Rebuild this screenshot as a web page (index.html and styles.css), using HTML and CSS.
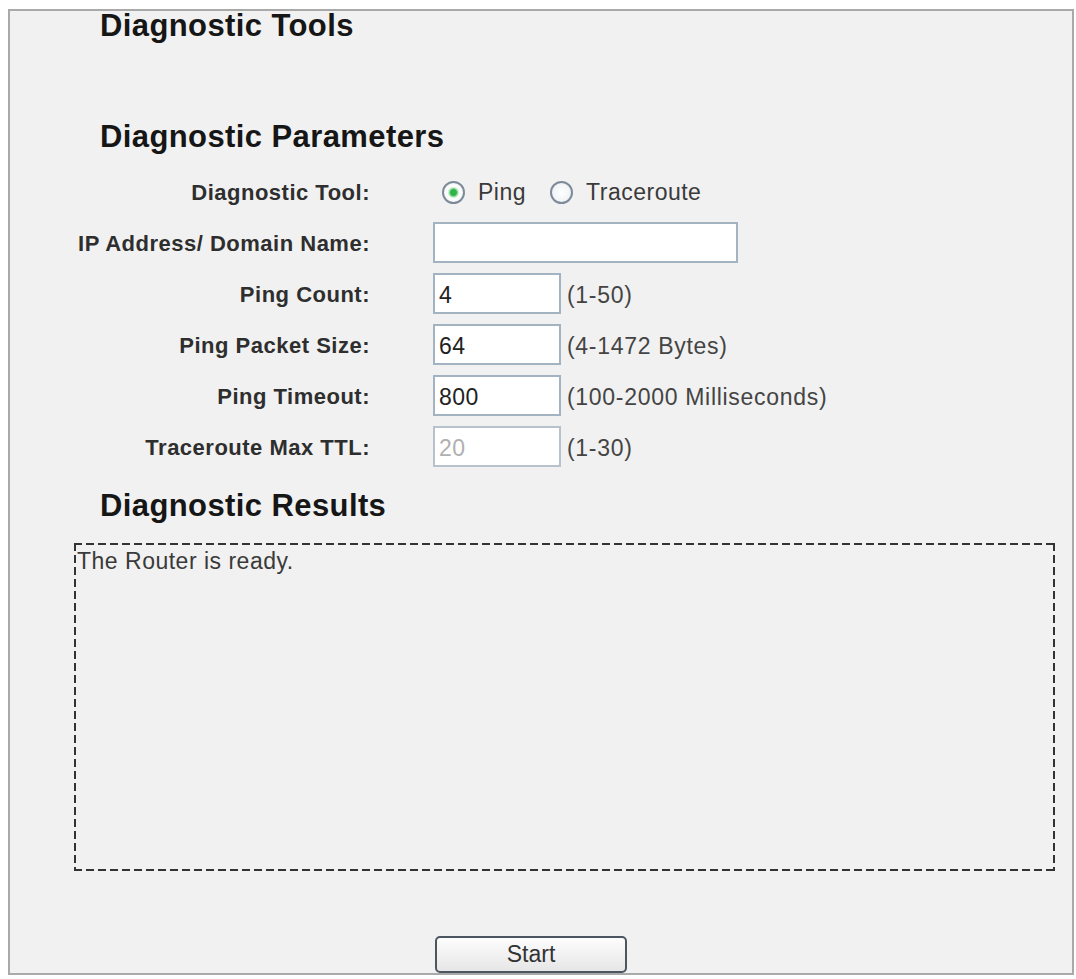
FILE: index.html
```html
<!DOCTYPE html>
<html lang="en">
<head>
    <meta charset="UTF-8">
    <title>Diagnostic Tools</title>
    <link rel="stylesheet" href="styles.css">
</head>
<body>

<div class="panel">
    <h2 class="title">Diagnostic Tools</h2>

    <h3 class="section">Diagnostic Parameters</h3>

    <div class="params">
        <div class="row">
            <span class="label">Diagnostic Tool:</span>
            <span class="radios">
                <label class="radio"><input type="radio" name="tool" value="ping" checked> Ping</label>
                <label class="radio"><input type="radio" name="tool" value="trace"> Traceroute</label>
            </span>
        </div>
        <div class="row">
            <label class="label" for="host">IP Address/ Domain Name:</label>
            <input class="field wide" type="text" id="host">
        </div>
        <div class="row">
            <label class="label" for="count">Ping Count:</label>
            <input class="field" type="text" id="count" value="4">
            <span class="hint">(1-50)</span>
        </div>
        <div class="row">
            <label class="label" for="size">Ping Packet Size:</label>
            <input class="field" type="text" id="size" value="64">
            <span class="hint">(4-1472 Bytes)</span>
        </div>
        <div class="row">
            <label class="label" for="timeout">Ping Timeout:</label>
            <input class="field" type="text" id="timeout" value="800">
            <span class="hint">(100-2000 Milliseconds)</span>
        </div>
        <div class="row">
            <label class="label" for="ttl">Traceroute Max TTL:</label>
            <input class="field" type="text" id="ttl" value="20" disabled>
            <span class="hint">(1-30)</span>
        </div>
    </div>

    <h3 class="section results-title">Diagnostic Results</h3>

    <!-- output of ping / traceroute goes here -->
    <div class="results">The Router is ready.</div>

    <div class="actions">
        <button class="start" type="button">Start</button>
    </div>
</div>

</body>
</html>
```

FILE: styles.css
```css
body {
    margin: 9px 2px 4px 8px;
    background-color: #fff;
    font-family: "Liberation Sans", Arial, sans-serif;
    color: #333;
}

.panel {
    border: 2px solid #a9a9a9;
    background-color: #f1f1f1;
}

.title, .section {
    margin: 0;
    padding-left: 90px;
    font-size: 31px;
    line-height: 30px;
    letter-spacing: 0.4px;
    font-weight: bold;
    color: #161616;
}

.section {
    margin-top: 81px;
}

.params {
    margin-top: 19px;
    display: flex;
    flex-direction: column;
    gap: 10px;
}

.row {
    display: flex;
    align-items: center;
    height: 41px;
}

.label {
    width: 360px;
    margin-right: 63px;
    padding-top: 3px;
    line-height: 38px;
    text-align: right;
    font-size: 22px;
    letter-spacing: 0.5px;
    font-weight: bold;
    color: #2e2e2e;
}

.radios {
    display: flex;
    align-items: center;
    padding-left: 9px;
    padding-top: 1px;
    font-size: 23px;
    letter-spacing: 0.5px;
    color: #3a3a3a;
}

.radio {
    display: flex;
    align-items: center;
    margin-right: 24px;
}

.radio input {
    appearance: none;
    width: 23px;
    height: 23px;
    margin: 0 13px 0 0;
    border: 2px solid #7d8b99;
    border-radius: 50%;
    background: radial-gradient(circle, #fff 0, #e9edf1 100%);
}

.radio input:checked {
    background: radial-gradient(circle, #2fb34a 0 3px, #8fdc9c 4px, #fff 6px, #e9edf1 100%);
}

.field {
    box-sizing: border-box;
    width: 128px;
    height: 41px;
    margin: 0;
    padding: 3px 4px 0;
    border: 2px solid #a4b3c2;
    background-color: #fff;
    font-family: "Liberation Sans", Arial, sans-serif;
    font-size: 23px;
    letter-spacing: 0.4px;
    color: #222;
}

.field.wide {
    width: 305px;
}

.field:disabled {
    color: #b0b0b0;
    border-color: #b7c2cd;
}

.hint {
    margin-left: 6px;
    padding-top: 3px;
    font-size: 23px;
    letter-spacing: 0.7px;
    color: #444;
}

.results-title {
    margin-top: 24px;
}

.results {
    box-sizing: border-box;
    height: 328px;
    margin: 22px 17px 0 64px;
    padding: 5px 3px;
    font-size: 23px;
    line-height: 26px;
    letter-spacing: 0.5px;
    color: #3a3a3a;
    background:
        repeating-linear-gradient(90deg, #333 0 8px, transparent 8px 12px) left top / 100% 2px no-repeat,
        repeating-linear-gradient(90deg, #333 0 8px, transparent 8px 12px) left bottom / 100% 2px no-repeat,
        repeating-linear-gradient(180deg, #333 0 8px, transparent 8px 12px) left top / 2px 100% no-repeat,
        repeating-linear-gradient(180deg, #333 0 8px, transparent 8px 12px) right top / 2px 100% no-repeat;
}

.actions {
    margin-top: 65px;
    padding-right: 20px;
    text-align: center;
    line-height: 0;
}

.start {
    width: 192px;
    height: 37px;
    border: 2px solid #4c5661;
    border-radius: 5px;
    background: linear-gradient(#fdfdfd, #e6e6e6);
    font-family: "Liberation Sans", Arial, sans-serif;
    font-size: 23px;
    color: #333;
    cursor: pointer;
}
```
